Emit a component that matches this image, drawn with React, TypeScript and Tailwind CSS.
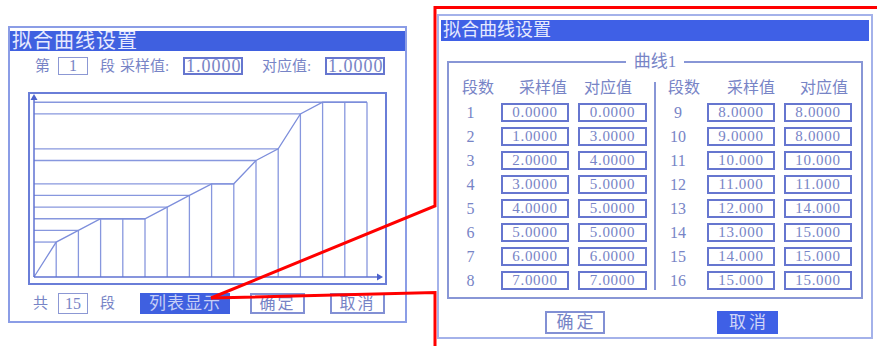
import React from 'react';

const vals = [0, 3, 4, 5, 5, 5, 6, 7, 8, 8, 10, 11, 14, 15, 15, 15];
const X = (i: number) => 6 + i * 22.2;
const Y = (v: number) => 185 - v * 11.65;

const rowsLeft = [
  ['1', '0.0000', '0.0000'],
  ['2', '1.0000', '3.0000'],
  ['3', '2.0000', '4.0000'],
  ['4', '3.0000', '5.0000'],
  ['5', '4.0000', '5.0000'],
  ['6', '5.0000', '5.0000'],
  ['7', '6.0000', '6.0000'],
  ['8', '7.0000', '7.0000'],
];
const rowsRight = [
  ['9', '8.0000', '8.0000'],
  ['10', '9.0000', '8.0000'],
  ['11', '10.000', '10.000'],
  ['12', '11.000', '11.000'],
  ['13', '12.000', '14.000'],
  ['14', '13.000', '15.000'],
  ['15', '14.000', '15.000'],
  ['16', '15.000', '15.000'],
];

const Chart: React.FC = () => {
  const levels: { v: number; last: number }[] = [];
  vals.forEach((v, i) => {
    if (v === 0) return;
    const found = levels.find((l) => l.v === v);
    if (found) found.last = i;
    else levels.push({ v, last: i });
  });
  return (
    <svg width="359" height="193" viewBox="0 0 359 193" className="block">
      <rect x="1" y="1" width="357" height="191" fill="white" stroke="#6a7ed8" strokeWidth="2" />
      {levels.map((l) => (
        <line key={l.v} x1={6} y1={Y(l.v)} x2={X(l.last)} y2={Y(l.v)} stroke="#8797de" strokeWidth="1.3" />
      ))}
      {vals.map((v, i) =>
        i === 0 ? null : (
          <line key={i} x1={X(i)} y1={Y(v)} x2={X(i)} y2={185} stroke="#8797de" strokeWidth="1.3" />
        )
      )}
      <polyline
        points={vals.map((v, i) => `${X(i)},${Y(v)}`).join(' ')}
        fill="none"
        stroke="#7d8edb"
        strokeWidth="1.3"
      />
      <line x1={6} y1={185} x2={6} y2={7} stroke="#5f72d2" strokeWidth="1.5" />
      <polygon points="6,2 2.5,8 9.5,8" fill="#4c62cc" />
      <line x1={6} y1={185} x2={349} y2={185} stroke="#5f72d2" strokeWidth="1.5" />
      <polygon points="355,185 349,181.5 349,188.5" fill="#4c62cc" />
    </svg>
  );
};

const Box: React.FC<{ w: string; children: React.ReactNode }> = ({ w, children }) => (
  <div className={`${w} h-[19px] border-2 border-[#6676cf] flex items-center justify-center text-[15px] tracking-[0.7px] leading-none`}>
    {children}
  </div>
);

const Column: React.FC<{ rows: string[][]; right?: boolean }> = ({ rows, right }) => (
  <div className="flex flex-col">
    {right ? (
      <div className="flex h-[20px] items-center text-[16px] leading-none">
        <span className="ml-[12px]">段数</span>
        <span className="ml-[27px]">采样值</span>
        <span className="ml-[25px]">对应值</span>
      </div>
    ) : (
      <div className="flex h-[20px] items-center text-[16px] leading-none">
        <span className="ml-[13px]">段数</span>
        <span className="ml-[25px]">采样值</span>
        <span className="ml-[17px]">对应值</span>
      </div>
    )}
    <div className="mt-[5px] flex flex-col gap-[5px]">
      {rows.map((r) => (
        <div key={r[0]} className="flex h-[19px] items-center">
          <div className={`${right ? 'w-[44px]' : 'w-[43px]'} text-center text-[16px] leading-none`}>{r[0]}</div>
          <div className={right ? 'ml-[7px]' : 'ml-[9px]'}>
            <Box w="w-[68px]">{r[1]}</Box>
          </div>
          <div className="ml-[9px]">
            <Box w={right ? 'w-[68px]' : 'w-[69px]'}>{r[2]}</Box>
          </div>
        </div>
      ))}
    </div>
  </div>
);

export default function App() {
  return (
    <div className="relative w-[877px] h-[346px] bg-white overflow-hidden font-['Liberation_Serif','Noto_Sans_CJK_SC',serif] text-[#7784c6]">
      <div className="flex items-start">
        {/* main screen */}
        <div className="ml-[8px] mt-[26px] w-[399px] border-2 border-[#8b9de6] flex flex-col pb-[7px]">
          <div className="mt-[3px] h-[20px] bg-[#3f60e0] text-[#e6eaff] text-[20px] leading-[20px] pl-[2px] tracking-[1px]">
            拟合曲线设置
          </div>
          <div className="mt-[6px] h-[18px] flex items-center text-[15px] leading-none">
            <span className="ml-[25px]">第</span>
            <div className="ml-[8px] w-[30px] h-[18px] border border-[#8c98d4] flex items-center justify-center text-[16px]">1</div>
            <span className="ml-[12px]">段</span>
            <span className="ml-[5px] w-[63px]">采样值:</span>
            <div className="w-[60px] h-[18px] border-2 border-[#6676cf] flex items-center pl-[1px] text-[18px] tracking-[1px]">1.0000</div>
            <span className="ml-[19px] w-[63px]">对应值:</span>
            <div className="w-[60px] h-[18px] border-2 border-[#6676cf] flex items-center pl-[1px] text-[18px] tracking-[1px]">1.0000</div>
          </div>
          <div className="mt-[17px] ml-[18px]">
            <Chart />
          </div>
          <div className="mt-[8px] h-[21px] flex items-center text-[15px] leading-none">
            <span className="ml-[23px]">共</span>
            <div className="ml-[10px] w-[30px] h-[21px] border border-[#8c98d4] flex items-center justify-center text-[16px]">15</div>
            <span className="ml-[12px]">段</span>
            <div className="ml-[25px] w-[90px] h-[21px] bg-[#3f60e0] text-[#c6cef6] flex items-center justify-center text-[17px] tracking-[1px]">列表显示</div>
            <div className="ml-[20px] w-[55px] h-[21px] border-2 border-[#8290d4] flex items-center justify-center text-[16px] tracking-[2px]">确定</div>
            <div className="ml-[25px] w-[55px] h-[21px] border-2 border-[#8290d4] flex items-center justify-center text-[16px] tracking-[2px]">取消</div>
          </div>
        </div>

        {/* list view */}
        <div className="ml-[30px] mt-[14px] w-[436px] border-2 border-[#a4b2ea] flex flex-col pb-[3px]">
          <div className="mt-[4px] mx-[2px] h-[21px] bg-[#3f60e6] text-[#e6eaff] text-[18px] leading-[21px] pl-[2px]">
            拟合曲线设置
          </div>
          <fieldset className="mt-[10px] mx-[8px] border-2 border-[#8896d6] pt-[5px] pb-[7px]">
            <legend className="mx-auto px-[8px] text-[17px] leading-[22px]">曲线1</legend>
            <div className="flex">
              <div className="w-[205px]">
                <Column rows={rowsLeft} />
              </div>
              <div className="mt-[4px] w-[2px] bg-[#8896d6]" />
              <div className="flex-1">
                <Column rows={rowsRight} right />
              </div>
            </div>
          </fieldset>
          <div className="mt-[12px] flex h-[23px]">
            <div className="ml-[106px] w-[60px] h-[23px] border-2 border-[#8290d4] flex items-center justify-center text-[17px] tracking-[3px] pl-[3px]">确定</div>
            <div className="ml-[112px] w-[61px] h-[23px] bg-[#3f60e6] text-[#d0d6f8] flex items-center justify-center text-[17px] tracking-[3px] pl-[3px]">取消</div>
          </div>
        </div>
      </div>

      {/* red callout lines */}
      <svg className="absolute inset-0 pointer-events-none" width="877" height="346" viewBox="0 0 877 346">
        <polyline points="877,7.5 435,7.5 435,206 211,298" fill="none" stroke="#ff0000" strokeWidth="3" />
        <polyline points="211,298 435,292.5 435,346" fill="none" stroke="#ff0000" strokeWidth="3" />
      </svg>
    </div>
  );
}
